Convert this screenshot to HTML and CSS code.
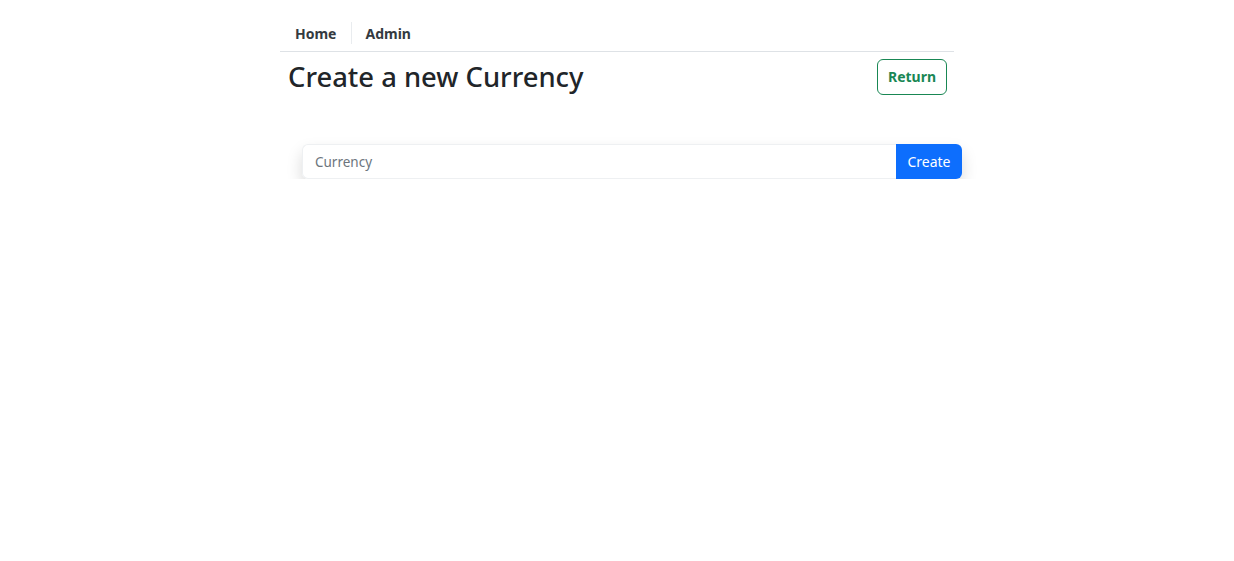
FILE: index.html
```html
<!DOCTYPE html>
<html lang="en">
<head>
<meta charset="utf-8">
<title>Create a new Currency</title>
<link rel="stylesheet" href="styles.css">
</head>
<body>
<div class="container">
  <nav class="topnav">
    <a class="nav-link" href="#">Home</a>
    <a class="nav-link" href="#">Admin</a>
  </nav>
  <div class="header">
    <h2 class="title">Create a new Currency</h2>
    <a class="btn-return" href="#">Return</a>
  </div>
  <form class="input-group">
    <input class="form-input" type="text" placeholder="Currency">
    <button class="btn-create" type="button">Create</button>
  </form>
</div>
</body>
</html>
```
FILE: styles.css
```css
* { box-sizing: border-box; }
html, body { margin: 0; padding: 0; background: #fff; }
body {
  font-family: "Noto Sans", "Open Sans", sans-serif;
  color: #212529;
}
.container {
  width: 674px;
  margin: 0 auto;
}
.topnav {
  display: flex;
  padding-top: 16px;
  border-bottom: 1px solid #dee2e6;
}
.nav-link {
  position: relative;
  display: block;
  padding: 7px 15px 6px;
  font-size: 14px;
  font-weight: 700;
  color: #343a40;
  text-decoration: none;
  line-height: 22px;
}
.nav-link + .nav-link { padding-left: 14px; }
.nav-link + .nav-link::before {
  content: "";
  position: absolute;
  left: 0;
  top: 6px;
  height: 22px;
  width: 1px;
  background: #e9ecef;
}
.header {
  display: flex;
  justify-content: space-between;
  align-items: flex-start;
  padding: 0 7px 0 8px;
}
.title {
  margin: 9px 0 0;
  font-size: 27.4px;
  font-weight: 500;
  line-height: 1.2;
  color: #212529;
}
.btn-return {
  margin-top: 7px;
  display: block;
  width: 70px;
  height: 36px;
  line-height: 34px;
  text-align: center;
  border: 1px solid #198754;
  border-radius: 6px;
  color: #198754;
  font-weight: 700;
  font-size: 14px;
  text-decoration: none;
}
.input-group {
  display: flex;
  width: 660px;
  margin: 49px 0 0 22px;
  height: 35px;
  border-radius: 6px;
  box-shadow: 0 8px 16px rgba(0,0,0,.15);
}
.form-input {
  flex: 1;
  min-width: 0;
  height: 35px;
  padding: 0 12px;
  font-family: inherit;
  font-size: 13.5px;
  color: #212529;
  border: 1px solid #eef0f2;
  border-right: 0;
  border-radius: 6px 0 0 6px;
  outline: none;
}
.form-input::placeholder { color: #6c757d; }
.btn-create {
  width: 66px;
  height: 35px;
  padding: 0;
  font-family: inherit;
  font-size: 14px;
  color: #fff;
  background: #0d6efd;
  border: 0;
  border-radius: 0 6px 6px 0;
}
```
